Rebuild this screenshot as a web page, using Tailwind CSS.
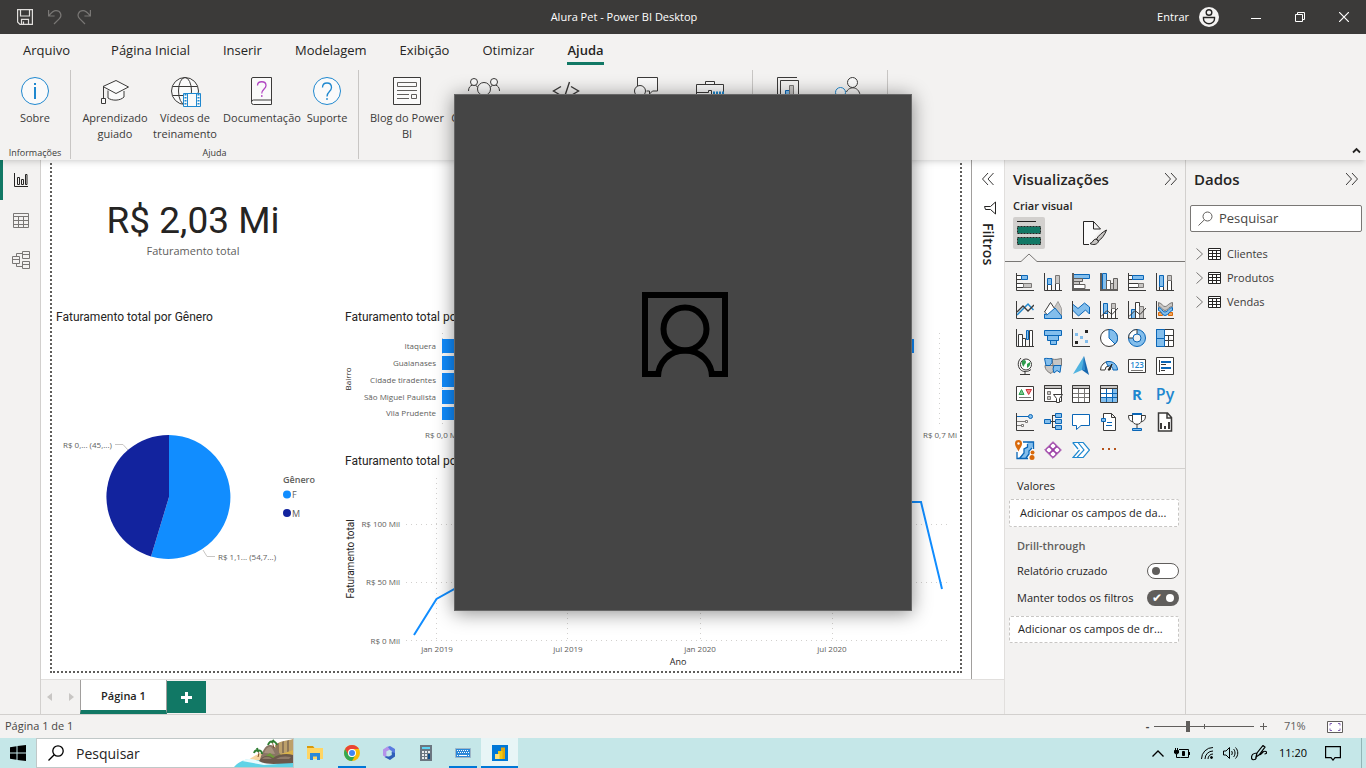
<!DOCTYPE html>
<html lang="pt-BR">
<head>
    <meta charset="UTF-8">
    <title>Alura Pet - Power BI Desktop</title>
    <script src="https://cdn.jsdelivr.net/npm/@tailwindcss/browser@4"></script>
</head>
<body class="min-h-screen flex flex-col relative bg-[#f3f2f1] text-[#252423] text-[11px] font-['Open_Sans',sans-serif]">

<!-- Title bar -->
<header class="h-[34px] bg-[#3b3a39] text-white flex items-center">
    <div class="w-32 pl-[17px] flex items-center gap-[14px]">
        <button aria-label="Salvar"><svg class="w-4 h-4" viewBox="0 0 16 16" fill="none" stroke="#e1dfdd" stroke-width="1.2"><path d="M.6.6h14.8v14.8H3L.6 13zM3.5.6v6.4h9V.6M4.5 15.4v-5h7v5M6.5 12.5v3"/></svg></button>
        <button aria-label="Desfazer"><svg class="w-4 h-4" viewBox="0 0 16 16" fill="none" stroke="#797775" stroke-width="1.2"><path d="M1.600 1v6h6M1.800 6.800C4 4 6 1.600 9 1.600c4.500 0 6.500 4.800 3.400 8L7 15"/></svg></button>
        <button aria-label="Refazer"><svg class="w-4 h-4" viewBox="0 0 16 16" fill="none" stroke="#797775" stroke-width="1.2"><path d="M13.400 1v6h-6M13.200 6.800C11 4 9 1.600 6 1.600c-4.500 0-6.500 4.800-3.400 8L8 15"/></svg></button>
    </div>
    <h1 class="flex-1 text-center">Alura Pet - Power BI Desktop</h1>
    <div class="w-[246px] flex items-center justify-end">
        <button class="flex items-center gap-[10px] mr-[15px]">Entrar
            <svg class="w-5 h-5" viewBox="0 0 20 20"><circle cx="10" cy="10" r="10" fill="#f3f2f1"/><g fill="none" stroke="#252423" stroke-width="1.400"><circle cx="10" cy="5.500" r="2.800"/><path d="M4.500 10.500h11v1.500a5.500 4.700 0 0 1-11 0z"/></g></svg>
        </button>
        <button aria-label="Minimizar" class="w-11 h-[34px] flex items-center justify-center"><svg class="w-[10px] h-[10px]" viewBox="0 0 10 10" stroke="#fff"><path d="M0 6.500h10"/></svg></button>
        <button aria-label="Restaurar" class="w-11 h-[34px] flex items-center justify-center"><svg class="w-[10px] h-[10px]" viewBox="0 0 10 10" fill="none" stroke="#fff"><path d="M.5 2.500h7v7h-7zM2.500 2.500v-2h7v7h-2"/></svg></button>
        <button aria-label="Fechar" class="w-11 h-[34px] flex items-center justify-center"><svg class="w-[10px] h-[10px]" viewBox="0 0 10 10" stroke="#fff" stroke-width="1.200"><path d="M0 0l10 10M10 0L0 10"/></svg></button>
    </div>
</header>

<!-- Ribbon -->
<div class="relative z-10 h-[126px] bg-[#f3f2f1] shadow-md">
    <nav class="h-9 pl-[23px] flex items-start gap-[33px] text-[13px] leading-8">
        <button class="mr-2">Arquivo</button>
        <button>Página Inicial</button>
        <button>Inserir</button>
        <button>Modelagem</button>
        <button>Exibição</button>
        <button>Otimizar</button>
        <button class="h-[31px] border-b-3 border-[#117865] font-semibold">Ajuda</button>
    </nav>
    <div class="h-[89px] flex text-center leading-4 text-[#3b3a39] whitespace-nowrap">
        <div class="w-[71px] border-r border-[#c8c6c4] flex flex-col justify-between">
            <button class="w-[70px] pt-[7px] flex flex-col items-center gap-[5px]">
                <svg class="w-7 h-7" viewBox="0 0 28 28" fill="none" stroke="#1f88cf"><circle cx="14" cy="14" r="13.500" fill="#fafafa"/><path stroke-width="2" d="M14 10v12M14 6v2"/></svg>
                Sobre
            </button>
            <span class="text-[9px] leading-3">Informações</span>
        </div>
        <div class="w-[288px] border-r border-[#c8c6c4] flex flex-col justify-between">
            <div class="flex pl-[6px] pt-[7px]">
                <button class="w-[76px] flex flex-col items-center gap-[5px]">
                    <svg class="w-7 h-7" viewBox="0 0 28 28" fill="none" stroke="#3b3a39"><path fill="#fafafa" d="M7 13.500v7.500c4 3 12 3 16-1v-6"/><path fill="#fafafa" d="M2 9.500L15 3.500 27.500 10 15 16.500zM2.500 10v11M.5 21.500h4v5h-4z"/></svg>
                    <span>Aprendizado<br>guiado</span>
                </button>
                <button class="w-16 flex flex-col items-center gap-[5px]">
                    <svg class="w-8 h-[30px] -mb-[2px]" viewBox="0 0 32 30" fill="none" stroke="#3b3a39"><circle cx="16" cy="14" r="13.500" fill="#fafafa"/><ellipse cx="16" cy="14" rx="6.500" ry="13.500"/><path d="M4 9.500h24M4 18.500h10"/><path stroke="#1f88cf" fill="#fafafa" d="M14.500 16.500h17v13h-17zM18.500 16.500v13M27.500 16.500v13"/><path stroke="#1f88cf" stroke-width="2" stroke-dasharray="1.500 1.500" d="M16.500 17v12M29.500 17v12"/></svg>
                    <span>Vídeos de<br>treinamento</span>
                </button>
                <button class="w-[90px] flex flex-col items-center gap-[5px]">
                    <svg class="w-7 h-7" viewBox="0 0 28 28" fill="none" stroke="#3b3a39"><path fill="#fafafa" d="M5 .5h18.500v27H5.500a2 2 0 0 1-2-2V2A1.500 1.500 0 0 1 5 .5zM3.500 25a2 2 0 0 1 2-2h18"/><path stroke="#b146c2" stroke-width="1.300" d="M9.500 8.500c0-5 8.500-5 8.500 0 0 3.500-4.200 3.500-4.200 8M13.800 18v2"/></svg>
                    Documentação
                </button>
                <button class="w-10 flex flex-col items-center gap-[5px]">
                    <svg class="w-7 h-7" viewBox="0 0 28 28" fill="none" stroke="#1f88cf"><circle cx="14" cy="14" r="13.500" fill="#fafafa"/><path stroke-width="1.300" d="M9.500 10.500c0-6 9-6 9 0 0 4-4.500 4-4.500 9M14 21v2"/></svg>
                    Suporte
                </button>
            </div>
            <span class="text-[9px] leading-3">Ajuda</span>
        </div>
        <div class="w-[394px] border-r border-[#c8c6c4] flex items-start pt-[7px]">
            <button class="w-24 flex flex-col items-center gap-[5px]">
                <svg class="w-7 h-7" viewBox="0 0 28 28" fill="none" stroke="#3b3a39"><path fill="#fafafa" d="M.5.5h27v27H.5z"/><path stroke="#605e5c" d="M4.500 5.500h19v4h-19zM4 13.500h20M4 17.500h12M4 21.500h12M18.500 17.500h5v4h-5z"/></svg>
                <span>Blog do Power<br>BI</span>
            </button>
            <button class="w-[58px] flex flex-col items-center gap-[5px]">
                <svg class="w-8 h-7" viewBox="0 0 32 28" fill="none" stroke="#3b3a39"><path d="M.5 14c0-7 7-7.500 9.500-3.500M31.500 14c0-7-7-7.500-9.500-3.500"/><g fill="#fafafa"><circle cx="6" cy="5" r="3.500"/><circle cx="26" cy="5" r="3.500"/><circle cx="16" cy="12" r="6.500"/></g></svg>
                Comunidade
            </button>
            <button aria-label="Power BI para desenvolvedores" class="w-[106px] flex justify-center"><svg class="w-7 h-7" viewBox="0 0 28 28" fill="none" stroke="#3b3a39" stroke-width="1.400"><path d="M9 9.500L1.500 14 9 18.500M19 9.500l7.500 4.500-7.500 4.500M17.500 5l-6 18"/></svg></button>
            <button aria-label="Enviar uma ideia" class="w-[54px] flex justify-center"><svg class="w-7 h-7" viewBox="0 0 28 28" fill="none" stroke="#3b3a39"><path fill="#fafafa" d="M5.500 12V.5h20v13.500h-5l-3 3v-3h-3"/><circle cx="8" cy="14" r="5.500" fill="#fafafa"/></svg></button>
            <button aria-label="Ferramentas externas" class="w-[74px] flex justify-center"><svg class="w-7 h-7" viewBox="0 0 28 28" fill="none" stroke="#3b3a39"><path fill="#fafafa" d="M.5 7.500h27V20H.5zM9.500 7.500v-3h9v3M.5 15.500h12v-2h3v4"/><path stroke="#1f88cf" stroke-width="3" stroke-dasharray="2 1" d="M17 16h11"/></svg></button>
        </div>
        <div class="w-[135px] border-r border-[#c8c6c4] flex items-start pt-[7px]">
            <button aria-label="Exemplos" class="w-[70px] flex justify-center"><svg class="w-7 h-7" viewBox="0 0 28 28" fill="none" stroke="#3b3a39"><path d="M3.500 24V.5h19.500M6.500 24V3.500h18V24"/><path fill="#83beec" stroke="#0a66b7" d="M11.500 13.500h4V24h-4z"/><path fill="#c8c6c4" stroke="#797775" d="M15.500 8.500h4V24h-4z"/></svg></button>
            <button aria-label="Comunidade de parceiros" class="w-[50px] flex justify-center"><svg class="w-7 h-7" viewBox="0 0 28 28" fill="none" stroke="#3b3a39"><circle cx="18.500" cy="5.500" r="5" fill="#fafafa"/><path d="M12.500 15c2-5.500 12-6.500 13.500 3"/><circle cx="6.500" cy="15.500" r="5" stroke="#1f88cf" fill="#fafafa"/></svg></button>
        </div>
        <button aria-label="Recolher a faixa de opções" class="ml-auto mr-[5px] self-end pb-1"><svg class="w-[9px] h-[9px]" viewBox="0 0 9 9" fill="none" stroke="#252423" stroke-width="1.800"><path d="M1 6.500L4.500 3 8 6.500"/></svg></button>
    </div>
</div>

<main class="flex-1 flex">
    <!-- View switcher -->
    <nav class="w-[41px] border-r border-[#d2d0ce]">
        <button aria-label="Exibição de relatório" class="w-10 h-10 pr-px border-l-3 border-[#117865] flex items-center justify-center"><svg class="w-[14px] h-[14px]" viewBox="0 0 14 14" fill="none" stroke="#252423"><path d="M.5 0v13.500H14M3.500 4.500h2v7h-2zM7.500 6.500h2v5h-2zM11.500 1.500h1.500v10h-1.500z"/></svg></button>
        <button aria-label="Exibição de tabela" class="w-[41px] h-10 flex items-center justify-center"><svg class="w-4 h-[15px]" viewBox="0 0 16 15" fill="none" stroke="#797775"><path d="M.5.5h15v14H.5zM.5 3.500h15M.5 7.500h15M.5 11.500h15M5.500 3v11M10.500 3v11"/></svg></button>
        <button aria-label="Exibição de modelo" class="w-[41px] h-10 flex items-center justify-center"><svg class="w-[18px] h-[18px]" viewBox="0 0 18 18" fill="none" stroke="#797775"><path d="M10.500.5h7v7h-7zM10.500 3.500h7M10.500 10.500h7v7h-7zM10.500 13.500h7M.5 5.500h7v7h-7zM.5 8.500h7M4.500 5.500v-3h6M4.500 12.500v3h6"/></svg></button>
    </nav>

    <div class="flex-1 flex flex-col">
        <div class="flex-1 flex bg-white">
            <!-- Report page -->
            <div class="flex-1 px-[9px] pt-[3px] pb-[6px]">
                <div class="h-full border-2 border-t-0 border-dotted border-[#605e5c] grid grid-cols-[288px_1fr] grid-rows-[144px_1fr] content-start">
                    <div class="w-[282px] pt-9 text-center font-['Roboto',sans-serif]">
                        <p class="text-[37px] leading-[44px]">R$ 2,03 Mi</p>
                        <p class="leading-4 text-[#605e5c] font-['Open_Sans',sans-serif]">Faturamento total</p>
                    </div>
                    <div></div>
                    <!-- Pie: F 54,7% / M 45,3% -->
                    <svg class="w-full text-[8px] font-['Open_Sans',sans-serif]" viewBox="0 0 288 364" fill="#605e5c">
                        <text class="text-[12px] font-['Roboto',sans-serif]" x="4" y="14" fill="#252423">Faturamento total por Gênero</text>
                        <path fill="#118dff" d="M117 190V128a62 62 0 1 1-18 121.500z"/>
                        <path fill="#12239e" d="M117 190L99 249.500A62 62 0 0 1 117 128z"/>
                        <path fill="none" stroke="#c8c6c4" d="M63 137.500h8l5 5.500M151 243l4 6.500h8"/>
                        <text x="11" y="141">R$ 0,... (45,...)</text>
                        <text x="166" y="253">R$ 1,1... (54,7...)</text>
                        <text class="text-[9px] font-semibold" x="231" y="176">Gênero</text>
                        <circle cx="235" cy="187.500" r="4" fill="#118dff"/><text class="text-[9px]" x="240" y="191">F</text>
                        <circle cx="235" cy="206" r="4" fill="#12239e"/><text class="text-[9px]" x="240" y="210">M</text>
                    </svg>
                    <div>
                        <!-- Bars by neighbourhood -->
                        <svg class="w-full text-[8px] font-['Open_Sans',sans-serif]" viewBox="0 0 620 144" fill="#605e5c">
                            <text class="text-[12px] font-['Roboto',sans-serif]" x="5" y="14" fill="#252423">Faturamento total por Bairro</text>
                            <path stroke="#d2d0ce" stroke-dasharray="1 4" d="M102.500 26v94M599.500 26v94"/>
                            <g fill="#118dff"><path d="M102 32h472v14H102zM102 49h330v14H102zM102 66h300v14H102zM102 83h260v14H102zM102 100h240v13H102z"/></g>
                            <g text-anchor="end">
                                <text x="96" y="42">Itaquera</text>
                                <text x="96" y="59">Guaianases</text>
                                <text x="96" y="76">Cidade tiradentes</text>
                                <text x="96" y="93">São Miguel Paulista</text>
                                <text x="96" y="109">Vila Prudente</text>
                            </g>
                            <g text-anchor="middle">
                                <text x="102" y="131">R$ 0,0 Mi</text>
                                <text x="600" y="131">R$ 0,7 Mi</text>
                                <text transform="translate(11 72) rotate(-90)" fill="#252423">Bairro</text>
                            </g>
                        </svg>
                        <!-- Revenue over time -->
                        <svg class="w-full text-[8px] font-['Open_Sans',sans-serif]" viewBox="0 0 620 220" fill="#605e5c">
                            <text class="text-[12px] font-['Roboto',sans-serif]" x="5" y="14" fill="#252423">Faturamento total por Ano</text>
                            <path stroke="#d2d0ce" stroke-dasharray="1 4" d="M66 73.500h543M66 131.500h543M66 189.500h543M96.500 27v163M227.500 27v163M360.500 27v163M492.500 27v163"/>
                            <path fill="none" stroke="#118dff" stroke-width="2" d="M74 184l22.500-36 18-10 60-20 80-30 100-20 120-10 80-7h26.500l21 87"/>
                            <g text-anchor="end">
                                <text x="60" y="76">R$ 100 Mil</text>
                                <text x="60" y="134">R$ 50 Mil</text>
                                <text x="60" y="193">R$ 0 Mil</text>
                            </g>
                            <g text-anchor="middle">
                                <text x="97" y="201">jan 2019</text>
                                <text x="228" y="201">jul 2019</text>
                                <text x="360" y="201">jan 2020</text>
                                <text x="492" y="201">jul 2020</text>
                                <text class="text-[9px]" x="338" y="214" fill="#252423">Ano</text>
                                <text class="text-[10px] font-['Roboto',sans-serif]" transform="translate(14 108) rotate(-90)" fill="#252423">Faturamento total</text>
                            </g>
                        </svg>
                    </div>
                </div>
            </div>
            <!-- Collapsed filters pane -->
            <aside class="w-[34px] border-x border-l-[#a19f9d] border-r-[#e1dfdd] flex flex-col items-center pt-[13px]">
                <button aria-label="Expandir filtros"><svg class="w-3 h-3" viewBox="0 0 12 12" fill="none" stroke="#3b3a39"><path d="M6 0L.5 6 6 12M11.500 0L6 6l5.500 6"/></svg></button>
                <svg class="w-3 h-[14px] mt-4 ml-[3px]" viewBox="0 0 12 14" fill="none" stroke="#252423"><path d="M11.500 1v12L6.500 8.500h-5l-1-3h6z"/></svg>
                <h2 class="mt-2 text-[14px] leading-5 font-semibold [writing-mode:vertical-rl]">Filtros</h2>
            </aside>
        </div>
        <!-- Page tabs -->
        <div class="h-[35px] flex border-t border-r border-[#e1dfdd]">
            <div class="w-[39px] flex items-center justify-between px-[6px]">
                <button aria-label="Página anterior"><svg class="w-[5px] h-2" viewBox="0 0 5 8" fill="#c8c6c4"><path d="M5 0v8L0 4z"/></svg></button>
                <button aria-label="Próxima página"><svg class="w-[5px] h-2" viewBox="0 0 5 8" fill="#c8c6c4"><path d="M0 0v8l5-4z"/></svg></button>
            </div>
            <button class="w-[87px] pt-[3px] bg-white border-x border-x-[#a19f9d] border-b-4 border-b-[#117865] font-semibold">Página 1</button>
            <button aria-label="Nova página" class="w-[39px] h-8 mt-px bg-[#117865] flex items-center justify-center"><svg class="w-[11px] h-[11px]" viewBox="0 0 11 11" stroke="#fff" stroke-width="3"><path d="M0 5.500h11M5.500 0v11"/></svg></button>
        </div>
    </div>

    <!-- Visualizations pane -->
    <aside class="w-[181px] border-r border-[#d2d0ce]">
        <div class="h-[38px] px-2 flex items-center justify-between">
            <h2 class="text-[15px] font-semibold">Visualizações</h2>
            <button aria-label="Recolher visualizações"><svg class="w-3 h-3" viewBox="0 0 12 12" fill="none" stroke="#3b3a39"><path d="M0 0l5.500 6L0 12M6 0l5.500 6L6 12"/></svg></button>
        </div>
        <h3 class="pl-2 pb-[3px] leading-4 font-semibold">Criar visual</h3>
        <div class="pl-2 flex items-center gap-[38px]">
            <button aria-label="Criar visual" class="w-8 h-8 bg-[#d2d0ce] rounded-xs flex items-center justify-center"><svg class="w-6 h-[25px]" viewBox="0 0 24 25" fill="none" stroke="#252423"><path d="M0 .5h19"/><path fill="#117865" stroke-dasharray="2 1" d="M.5 5.500h23v7H.5zM.5 16.500h23v7H.5z"/></svg></button>
            <button aria-label="Formatar página"><svg class="w-6 h-6" viewBox="0 0 24 24" fill="none" stroke="#252423"><path fill="#fafafa" d="M6 23.500H.5V.5h10l7 7.500M10.500.5V8h7"/><path fill="#c8c6c4" d="M23.500 9c-4 2-8.500 6-10 9l2 2c3-2 6.500-6.500 8-11zM13 18c-3 0-3 4-6 4.500 3 2 8 1 8.500-2.500z"/></svg></button>
        </div>
        <div class="flex items-end mt-1">
            <svg class="w-12 h-[9px]" viewBox="0 0 48 9" fill="none" stroke="#797775"><path d="M0 8.500h16L24 1l8 7.500h16"/></svg>
            <div class="flex-1 border-b border-[#797775]"></div>
        </div>
        <div class="grid grid-cols-[repeat(6,28px)] auto-rows-[28px] place-items-center pl-[6px] pt-[6px] pb-1 border-b border-[#d2d0ce]">
            <button aria-label="Barras empilhadas"><svg class="w-[18px] h-[18px]" viewBox="0 0 18 18" fill="#fff" stroke="#3b3a39"><path d="M.5 2.500h5v4h-5zM.5 10.500h7v4h-7z"/><path fill="#83beec" stroke="#0a66b7" d="M5.500 2.500h6v4h-6z"/><path fill="#c8c6c4" stroke="#797775" d="M7.500 10.500h8v4h-8z"/><path fill="none" d="M.5 0v17.500H18"/></svg></button>
            <button aria-label="Colunas empilhadas"><svg class="w-[18px] h-[18px]" viewBox="0 0 18 18" fill="#fff" stroke="#3b3a39"><path d="M3.500 11.500h4v6h-4zM11.500 10.500h4v7h-4z"/><path fill="#83beec" stroke="#0a66b7" d="M3.500 5.500h4v6h-4z"/><path fill="#c8c6c4" stroke="#797775" d="M11.500 2.500h4v8h-4z"/><path fill="none" d="M.5 0v17.500H18"/></svg></button>
            <button aria-label="Barras clusterizadas"><svg class="w-[18px] h-[18px]" viewBox="0 0 18 18" fill="#c8c6c4" stroke="#605e5c"><path fill="#83beec" stroke="#0a66b7" d="M.5 1.500h17v4H.5z"/><path d="M.5 5.500h10v3H.5zM.5 8.500h7v3H.5z"/><path fill="#fff" d="M.5 11.500h12.500v4H.5z"/><path fill="none" stroke-width="2" d="M1 0v17H18"/></svg></button>
            <button aria-label="Colunas clusterizadas"><svg class="w-[18px] h-[18px]" viewBox="0 0 18 18" fill="#c8c6c4" stroke="#605e5c"><path fill="#83beec" stroke="#0a66b7" d="M2.500.5h4v17h-4z"/><path fill="#fff" d="M6.500 7.500h4v10h-4z"/><path d="M10.500 10.500h3v7h-3zM13.500 5.500h4v12h-4z"/><path fill="none" stroke-width="2" d="M1 0v17H18"/></svg></button>
            <button aria-label="Barras 100% empilhadas"><svg class="w-[18px] h-[18px]" viewBox="0 0 18 18" fill="#fff" stroke="#3b3a39"><path d="M.5 2.500h4v4h-4zM.5 10.500h10v4H.5z"/><path fill="#83beec" stroke="#0a66b7" d="M4.500 2.500h11v4h-11z"/><path fill="#c8c6c4" stroke="#797775" d="M10.500 10.500h5v4h-5z"/><path fill="none" d="M.5 0v17.500H18"/></svg></button>
            <button aria-label="Colunas 100% empilhadas"><svg class="w-[18px] h-[18px]" viewBox="0 0 18 18" fill="#fff" stroke="#3b3a39"><path d="M3.500 13.500h4v4h-4zM11.500 7.500h4v10h-4z"/><path fill="#83beec" stroke="#0a66b7" d="M3.500 2.500h4v11h-4z"/><path fill="#c8c6c4" stroke="#797775" d="M11.500 2.500h4v5h-4z"/><path fill="none" d="M.5 0v17.500H18"/></svg></button>

            <button aria-label="Gráfico de linhas"><svg class="w-[18px] h-[18px]" viewBox="0 0 18 18" fill="none" stroke="#3b3a39"><path stroke="#1f88cf" stroke-width="1.500" d="M1 14l6-6 5-5 5.500 6"/><path stroke-width="1.300" d="M1 11l6-6 5 5 6-6"/><path d="M.5 0v17.500H18"/></svg></button>
            <button aria-label="Gráfico de área"><svg class="w-[18px] h-[18px]" viewBox="0 0 18 18" fill="#fff" stroke="#3b3a39"><path fill="#c8c6c4" stroke="#a19f9d" d="M9 9l5-8.500 3.500 7v10H9z"/><path d="M.5 11L6.500 1.500l6 9-6 6z"/><path fill="#83beec" stroke="#0a66b7" d="M.5 17.500V13l2.500 1 8-7 6.500 8v2.500z"/></svg></button>
            <button aria-label="Gráfico de área empilhada"><svg class="w-[18px] h-[18px]" viewBox="0 0 18 18" fill="#fff" stroke="#3b3a39"><path fill="#83beec" stroke="#0a66b7" d="M.5 3L6 7.500 12.500 2l5 4v7l-4-4-7 6-6-6z"/><path fill="none" d="M.5 0v17.500H18"/></svg></button>
            <button aria-label="Linha e colunas empilhadas"><svg class="w-[18px] h-[18px]" viewBox="0 0 18 18" fill="#fff" stroke="#3b3a39"><path d="M3.500 8.500h4v9h-4zM11.500 7.500h4v10h-4z"/><path fill="#83beec" stroke="#0a66b7" d="M3.500 2.500h4v10h-4z"/><path fill="#c8c6c4" stroke="#797775" d="M11.500 2.500h4v5h-4z"/><path fill="none" d="M.5 0v17.500H18M1 15.500l6-6 5 4 6-6.500"/></svg></button>
            <button aria-label="Linha e colunas clusterizadas"><svg class="w-[18px] h-[18px]" viewBox="0 0 18 18" fill="#fff" stroke="#3b3a39"><path fill="#83beec" stroke="#0a66b7" d="M3.500 8.500h4v9h-4z"/><path d="M7.500 1.500h4v16h-4z"/><path fill="#c8c6c4" stroke="#797775" d="M11.500 5.500h4v12h-4z"/><path fill="none" d="M.5 0v17.500H18M1 15.500l6-6 5 4 6-6.500"/></svg></button>
            <button aria-label="Faixa de opções"><svg class="w-[18px] h-[18px]" viewBox="0 0 18 18" fill="none" stroke="#3b3a39"><path fill="#c8c6c4" stroke="#797775" d="M2.500 1.500c4 1 4 4 6.500 4s3-3 7.500-4v4c-4 0-4.500 4-7.500 4s-3-4-6.500-4z"/><path fill="#f2a65a" stroke="#d8690b" d="M2.500 11.500h4v3h-4zM12.500 11.500h4v3h-4z"/><path fill="#83beec" stroke="#0a66b7" d="M2.500 6.500c3.500 0 3.500 4.500 6.500 4.500s4-4.500 7.500-4.500v3c-3 0-4 5-7.500 5s-3.500-5-6.500-5z"/><path d="M.5 0v17.500H18"/></svg></button>

            <button aria-label="Cascata"><svg class="w-[18px] h-[18px]" viewBox="0 0 18 18" fill="#fff" stroke="#3b3a39"><path d="M2.500 5.500h4v12h-4zM6.500 9.500h3v8h-3zM13.500 1.500h3v16h-3z"/><path fill="#83beec" stroke="#0a66b7" d="M10.500 1.500h2v9h-2z"/><path fill="none" d="M.5 0v17.500H18"/></svg></button>
            <button aria-label="Funil"><svg class="w-[18px] h-[18px]" viewBox="0 0 18 18" fill="#83beec" stroke="#0a66b7"><path d="M.5 1.500h17v5H.5zM3.500 6.500h11v5h-11zM6.500 11.500h6v4h-6z"/></svg></button>
            <button aria-label="Dispersão"><svg class="w-[18px] h-[18px]" viewBox="0 0 18 18" fill="none"><path fill="#83beec" d="M3 4h3v3H3zM8 7h3v3H8zM13 11h3v3h-3z"/><path fill="#252423" d="M13 1h3v3h-3zM3 12h3v3H3z"/><path stroke="#3b3a39" d="M.5 0v17.500H18"/></svg></button>
            <button aria-label="Pizza"><svg class="w-[18px] h-[18px]" viewBox="0 0 18 18" fill="#fff" stroke="#3b3a39"><circle cx="9" cy="9" r="8.500"/><path fill="#83beec" stroke="#0a66b7" d="M9 9V.5a8.500 8.500 0 0 1 6 14.500z"/></svg></button>
            <button aria-label="Rosca"><svg class="w-[18px] h-[18px]" viewBox="0 0 18 18" fill="#83beec" stroke="#0a66b7"><circle cx="9" cy="9" r="8.500"/><path fill="#fff" stroke="#3b3a39" d="M9 9H.5A8.500 8.500 0 0 1 9 .5z"/><circle cx="9" cy="9" r="4" fill="#f3f2f1"/></svg></button>
            <button aria-label="Treemap"><svg class="w-[18px] h-[18px]" viewBox="0 0 18 18" fill="#fff" stroke="#3b3a39"><path d="M.5.5h17v17H.5zM8.500 6.500h9M12.500 6.500v5h5M8.500 11.500h4v6"/><path fill="#83beec" stroke="#0a66b7" d="M.5.5h8v9h-8zM.5 9.500h8v8h-8z"/></svg></button>

            <button aria-label="Mapa"><svg class="w-[18px] h-[18px]" viewBox="0 0 18 18" fill="none" stroke="#3b3a39"><circle cx="10" cy="7.500" r="5.500" fill="#fff"/><path fill="#2f9e4f" stroke="none" d="M6 4c2-2 4-1 4 1s-2 2-2 4-3-2-2-5zM11 7l3-2c1 3-1 5-3 6z"/><path d="M5 1C1 4.500 1.500 11 5.500 13.500c3 1.800 7 1.200 9.500-1M9 14.500v3M4 17.500h10"/></svg></button>
            <button aria-label="Mapa coroplético"><svg class="w-[18px] h-[18px]" viewBox="0 0 18 18" fill="#c8c6c4" stroke="#797775"><path d="M8 2c4 1 6 0 9.500-.5V8.500H9zM1 8.500h8l1 5-3 3C4 15 1 13 1 8.500z"/><path fill="#83beec" stroke="#0a66b7" d="M.5 1.500C3 1 5 2 8 1.500v4l-2 3H2zM10 8.500h7l-1 7-3-2-3 2.500-1-4z"/></svg></button>
            <button aria-label="Mapa do Azure"><svg class="w-[18px] h-[20px]" viewBox="0 0 18 20"><path fill="#50b3e0" d="M12 0L1 18l9-4z"/><path fill="#1767ae" d="M12 0l5 19-7-5z"/><path fill="#2f8fd0" d="M12 0l-2 14 3 0z"/></svg></button>
            <button aria-label="Medidor"><svg class="w-[18px] h-[18px]" viewBox="0 0 18 18" fill="#83beec" stroke="#0a66b7"><path stroke="#3b3a39" fill="#fff" d="M.5 13A8.500 8.500 0 0 1 9 4.500V9a4 4 0 0 0-4 4z"/><path d="M6 5a8.500 8.500 0 0 1 11.500 8H13a4 4 0 0 0-5-4z"/><path fill="#252423" stroke="#252423" d="M12 7l-2 6H8z"/></svg></button>
            <button aria-label="Cartão"><svg class="w-[18px] h-[18px]" viewBox="0 0 18 18"><path fill="#fff" stroke="#3b3a39" d="M.5 2.500h17v13H.5z"/><path stroke="#797775" d="M3 13.500h12"/><text class="text-[8px] font-semibold" x="9" y="11" text-anchor="middle" fill="#1f88cf">123</text></svg></button>
            <button aria-label="Cartão de várias linhas"><svg class="w-[18px] h-[18px]" viewBox="0 0 18 18"><path fill="#fff" stroke="#3b3a39" d="M.5.5h17v17H.5z"/><path stroke="#3b3a39" d="M3.500 3v12M5 7.500h5M5 13.500h4"/><path stroke="#0a66b7" stroke-width="2" d="M5 5h10M5 11h10"/></svg></button>

            <button aria-label="KPI"><svg class="w-[18px] h-[18px]" viewBox="0 0 18 18" fill="#fff" stroke="#3b3a39"><path d="M.5 1.500h17v14H.5z"/><path stroke="#797775" d="M3 12.500h12"/><path fill="#7cc48f" stroke="#2f9e4f" d="M3 9.500L5.500 4.500 8 9.500z"/><path fill="#e88" stroke="#d13438" d="M10 4.500h5.500L12.700 9.500z"/></svg></button>
            <button aria-label="Segmentação de dados"><svg class="w-[19px] h-[18px]" viewBox="0 0 19 18" fill="#fff" stroke="#3b3a39"><path d="M.5.500h17v16H.5z"/><path fill="#c8c6c4" d="M.5.500h17v3H.5z"/><path fill="#c8c6c4" stroke="#797775" d="M3.500 6.500h3v3h-3zM3.500 11.500h3v3h-3z"/><path d="M9.500 9.500h9l-3 4v4h-3v-4z"/></svg></button>
            <button aria-label="Tabela"><svg class="w-[18px] h-[18px]" viewBox="0 0 18 18" fill="#fff" stroke="#3b3a39"><path d="M.5.500h17v17H.5z"/><path stroke="#797775" d="M6.500 3v14M12.500 3v14M1 8.500h16M1 12.500h16"/><path fill="#c8c6c4" d="M.5.500h17v3H.5z"/></svg></button>
            <button aria-label="Matriz"><svg class="w-[18px] h-[18px]" viewBox="0 0 18 18" fill="#fff" stroke="#3b3a39"><path d="M.5.500h17v17H.5z"/><path fill="#83beec" stroke="none" d="M12 3h5v14H1v-5h11z"/><path stroke="#0a66b7" d="M6.500 3v14M12.500 3v14M1 8.500h16M1 12.500h16"/><path fill="#c8c6c4" d="M.5.500h17v3H.5z"/></svg></button>
            <button aria-label="Visual do script R" class="text-[15px] leading-[18px] font-bold text-[#1f88cf]">R</button>
            <button aria-label="Visual do Python" class="text-[16px] leading-[20px] font-semibold text-[#1f88cf]">Py</button>

            <button aria-label="Principais influenciadores"><svg class="w-[18px] h-[18px]" viewBox="0 0 18 18" fill="#83beec" stroke="#3b3a39"><path stroke="#0a66b7" d="M1 3.500h12"/><circle cx="14.500" cy="3.500" r="2" stroke="#0a66b7"/><path stroke="#797775" fill="#fff" d="M1 8.500h8M9.500 7.500h2v2h-2zM1 12.500h4M5.500 11.500h2v2h-2z"/><path fill="none" d="M.5 0v17.500H18"/></svg></button>
            <button aria-label="Árvore hierárquica"><svg class="w-[18px] h-[18px]" viewBox="0 0 18 18" fill="#83beec" stroke="#0a66b7"><path fill="none" stroke="#3b3a39" d="M6 8.500h6M8.500 2.500v12M8 2.500h4M8 14.500h4"/><path d="M.5 6.500h6v4h-6zM11.500.5h6v4h-6zM11.500 6.500h6v4h-6zM11.500 12.500h6v4h-6z"/></svg></button>
            <button aria-label="P e R"><svg class="w-[18px] h-[18px]" viewBox="0 0 18 18" fill="#fff" stroke="#0a66b7"><path d="M.5 1.500h17v11H9l-4.500 4v-4h-4z"/></svg></button>
            <button aria-label="Narrativa"><svg class="w-[18px] h-[18px]" viewBox="0 0 18 18" fill="#fff" stroke="#3b3a39"><path d="M3.500.5h8l4 4v13h-12zM11.500.5v4h4"/><path stroke="#0a66b7" fill="#83beec" d="M1.500 5.500h4v3h-4zM7 9.500h5M6 12.500h6"/></svg></button>
            <button aria-label="Metas"><svg class="w-[18px] h-[18px]" viewBox="0 0 18 18" fill="#fff" stroke="#3b3a39"><path d="M4.500.5h9v7c0 5-9 5-9 0zM4.500 2.500h-4c0 4 1.500 6 4.500 6M13.500 2.500h4c0 4-1.500 6-4.500 6M9 11v4"/><path fill="#83beec" stroke="#0a66b7" d="M4.500 15.500h9v2h-9zM4.500.5h9v1h-9z"/></svg></button>
            <button aria-label="Relatório paginado"><svg class="w-[18px] h-[20px]" viewBox="0 0 18 20" fill="#fff" stroke="#3b3a39"><path stroke-width="1.500" d="M2.500 1h9l4 4.500V19h-13zM11 1v5h5"/><path fill="#3b3a39" stroke="none" d="M4 11h2v6H4zM8 14h2v3H8zM12 10h2v7h-2z"/></svg></button>

            <button aria-label="ArcGIS"><svg class="w-[20px] h-[20px]" viewBox="0 0 20 20" fill="#fff"><path d="M2 2h16v16H2z"/><path fill="#83beec" d="M12 2h6v5l-4 3v3l-3 5H3l6-4V9l4-3z"/><path fill="none" stroke="#0a66b7" stroke-width="1.300" d="M8 2h10.500v7M2 12v6.500h11M12.500 4v3L9 9v4l-4 5M17 8l-3 3v3l-3 4"/><path fill="#d8690b" d="M0 3.500a3.500 3.500 0 0 1 7 0c0 3-2 4-3.500 8C2 8 0 6.500 0 3.500z"/><circle cx="17.500" cy="12.500" r="2" fill="#d8690b"/><circle cx="17" cy="17.500" r="2.500" fill="#d8690b"/><circle cx="3.500" cy="3.500" r="1.200"/></svg></button>
            <button aria-label="Power Apps"><svg class="w-[18px] h-[18px]" viewBox="0 0 18 18" fill="#fff" stroke="#9b3fa5"><path d="M9 .7L17.300 9 9 17.300.7 9z"/><path fill="none" d="M5 5l8 8M13 5l-8 8"/><rect x="6.500" y="2.500" width="5" height="5" rx="1.500" transform="rotate(45 9 5)"/><rect x="6.500" y="10.500" width="5" height="5" rx="1.500" transform="rotate(45 9 13)"/><rect x="2.500" y="6.500" width="5" height="5" rx="1.500" transform="rotate(45 5 9)"/><rect x="10.500" y="6.500" width="5" height="5" rx="1.500" transform="rotate(45 13 9)"/></svg></button>
            <button aria-label="Power Automate"><svg class="w-[18px] h-[18px]" viewBox="0 0 18 18" fill="#fff" stroke="#1f88cf" stroke-width="1.200"><path d="M.7 1.500h10.500L17.500 9l-6.300 7.500H5M.7 1.500L6 8M6 1.500L12 9l-7 7.500H1L7.500 9"/></svg></button>
            <button aria-label="Obter mais visuais"><svg class="w-[18px] h-[18px]" viewBox="0 0 18 18" fill="#b5531b"><path d="M2 7h2v2H2zM8 7h2v2H8zM14 7h2v2h-2z"/></svg></button>
        </div>
        <div class="pl-1 pr-[6px] pt-2">
            <h3 class="pl-2 leading-[18px]">Valores</h3>
            <button class="mt-1 w-full h-7 pl-[10px] pt-px text-left bg-white border border-dashed border-[#c8c6c4] rounded-xs">Adicionar os campos de da...</button>
            <h3 class="pl-2 pt-2 leading-[22px] font-semibold text-[#605e5c]">Drill-through</h3>
            <label class="h-7 pl-2 flex items-center justify-between">Relatório cruzado
                <input type="checkbox" class="appearance-none w-8 h-4 flex items-center pl-[4px] bg-white border border-[#605e5c] rounded-full before:content-[''] before:w-2 before:h-2 before:rounded-full before:bg-[#605e5c]">
            </label>
            <label class="h-[26px] pl-2 flex items-center justify-between">Manter todos os filtros
                <input type="checkbox" checked class="appearance-none w-8 h-4 flex items-center justify-between px-[5px] bg-[#605e5c] rounded-full text-white text-[12px] leading-4 before:content-['✔'] after:content-[''] after:w-2 after:h-2 after:rounded-full after:bg-white">
            </label>
            <button class="mt-[5px] w-full h-[27px] pl-2 text-left bg-white border border-dashed border-[#c8c6c4] rounded-xs">Adicionar os campos de dr...</button>
        </div>
    </aside>

    <!-- Data pane -->
    <aside class="w-[180px]">
        <div class="h-[38px] px-2 flex items-center justify-between">
            <h2 class="text-[15px] font-semibold">Dados</h2>
            <button aria-label="Recolher dados"><svg class="w-3 h-3" viewBox="0 0 12 12" fill="none" stroke="#3b3a39"><path d="M0 0l5.500 6L0 12M6 0l5.500 6L6 12"/></svg></button>
        </div>
        <label class="mt-[7px] mx-1 h-[27px] px-[7px] flex items-center gap-[6px] bg-white border border-[#797775] rounded-xs">
            <svg class="w-[15px] h-[15px] shrink-0" viewBox="0 0 15 15" fill="none" stroke="#605e5c"><circle cx="9.500" cy="5.500" r="4.500"/><path d="M6.500 8.700L.5 14.500"/></svg>
            <input type="text" aria-label="Pesquisar campos" placeholder="Pesquisar" class="w-full outline-none text-[13px] placeholder:text-[#484644]">
        </label>
        <ul class="pt-[10px] leading-6 text-[#3b3a39]">
            <li><button class="pl-[10px] flex items-center">
                <svg class="w-[7px] h-3 mr-[5px]" viewBox="0 0 7 12" fill="none" stroke="#797775"><path d="M.5.500L6.500 6l-6 5.500"/></svg>
                <svg class="w-[13px] h-3 mr-[6px]" viewBox="0 0 13 12" fill="#fff" stroke="#252423"><path d="M.5.500h12v11H.5zM.5 2.500h12M.5 5.500h12M.5 8.500h12M4.500 2v9M8.500 2v9"/></svg>Clientes</button></li>
            <li><button class="pl-[10px] flex items-center">
                <svg class="w-[7px] h-3 mr-[5px]" viewBox="0 0 7 12" fill="none" stroke="#797775"><path d="M.5.500L6.500 6l-6 5.500"/></svg>
                <svg class="w-[13px] h-3 mr-[6px]" viewBox="0 0 13 12" fill="#fff" stroke="#252423"><path d="M.5.500h12v11H.5zM.5 2.500h12M.5 5.500h12M.5 8.500h12M4.500 2v9M8.500 2v9"/></svg>Produtos</button></li>
            <li><button class="pl-[10px] flex items-center">
                <svg class="w-[7px] h-3 mr-[5px]" viewBox="0 0 7 12" fill="none" stroke="#797775"><path d="M.5.500L6.500 6l-6 5.500"/></svg>
                <svg class="w-[13px] h-3 mr-[6px]" viewBox="0 0 13 12" fill="#fff" stroke="#252423"><path d="M.5.500h12v11H.5zM.5 2.500h12M.5 5.500h12M.5 8.500h12M4.500 2v9M8.500 2v9"/></svg>Vendas</button></li>
        </ul>
    </aside>
</main>

<!-- Status bar -->
<footer class="h-6 pl-[5px] pr-[23px] flex items-center border-t border-[#d2d0ce] text-[#484644]">
    <span>Página 1 de 1</span>
    <button aria-label="Diminuir zoom" class="ml-auto mr-[2px] w-[9px] font-bold">-</button>
    <div class="relative flex items-center">
        <span class="absolute left-[50px] w-px h-[5px] bg-[#605e5c]"></span>
        <input type="range" aria-label="Zoom" value="33" class="appearance-none w-[100px] h-px bg-[#605e5c] [&::-webkit-slider-thumb]:appearance-none [&::-webkit-slider-thumb]:w-1 [&::-webkit-slider-thumb]:h-[11px] [&::-webkit-slider-thumb]:bg-[#605e5c]">
    </div>
    <button aria-label="Aumentar zoom" class="ml-[6px]"><svg class="w-[7px] h-[7px]" viewBox="0 0 7 7" stroke="#605e5c"><path d="M0 3.500h7M3.500 0v7"/></svg></button>
    <span class="w-[60px] pl-[17px] text-[#605e5c]">71%</span>
    <button aria-label="Ajustar à página"><svg class="w-4 h-3" viewBox="0 0 16 12" fill="#fff" stroke="#605e5c"><path d="M.5.500h15v11H.5z"/><path stroke="#8764b8" d="M3 4.500v-2h2M11 2.500h2v2M3 7.500v2h2M11 9.500h2v-2"/></svg></button>
</footer>

<!-- Windows taskbar -->
<div class="h-[30px] flex bg-[#c5e7e8] text-black">
    <button aria-label="Iniciar" class="w-9 flex items-center justify-center"><svg class="w-4 h-4" viewBox="0 0 16 16"><path d="M0 2.200L6.500 1.300v6.200H0zM7.500 1.100L16 0v7.500H7.500zM0 8.500h6.500v6.200L0 13.800zM7.500 8.500H16V16l-8.500-1.100z"/></svg></button>
    <label class="w-[258px] pl-[11px] flex items-center gap-3 bg-white border border-[#c0c8c8]">
        <svg class="w-4 h-4 shrink-0" viewBox="0 0 16 16" fill="none" stroke="#000" stroke-width="1.300"><circle cx="10" cy="6" r="5.200"/><path d="M6.200 9.800L.5 15.500"/></svg>
        <input type="text" aria-label="Pesquisar no Windows" placeholder="Pesquisar" class="flex-1 min-w-0 outline-none text-[14px] placeholder:text-[#252423]">
        <svg class="w-[60px] h-7 shrink-0" viewBox="0 0 60 28"><path fill="#f6d5a0" d="M14 22c6-5 12-8 18-9l12 10z"/><path fill="#5fd3e6" d="M1 28c5-6 12-9 20-7l39 2v5z"/><path fill="#e9fbfd" d="M9 22c8-4 14-1 20 1s12 0 16 2l-14 1z"/><path fill="#bda06a" d="M42 6c6-5 12-4 18-6v19H42z"/><path fill="#8d7658" d="M43 5l3-1v13h-3zM49 3l2-1v12h-2zM54 2l2-1v12h-2z"/><path fill="#d9b24a" d="M46 16l14-5v6H46z"/><path fill="#8a7565" d="M27 21c2-8 5-16 11-15 5 1 9 10 12 13z"/><path fill="#a8937f" d="M31 14c2-5 5-7 7-6 2 2 3 5 4 7z"/><path fill="#6f9a3a" d="M31 18l6-4 5 4 5-3 2 4H30z"/><path fill="#6b584b" d="M26 22c3-6 10-6 14-3 5-4 14-5 20-3v8c-10 0-26 3-34-2z"/><path fill="#8f7a69" d="M29 20c3-3 7-3 10 0zM43 20c4-3 10-3 15-2l-2 2z"/><path fill="none" stroke="#7a4a25" d="M25 18c1-3 1-4 0-6M41 9c-1-3-1-4-2-6"/><path fill="none" stroke="#2f7d32" stroke-width="2" d="M21 14c1-3 3-3 4-2 2-1 4 0 4 3M35 6c1-3 3-4 4-3 2-1 4 0 5 3M25 12l-1-3M39 3l2-2"/></svg>
    </label>
    <div class="flex pl-[2px]">
        <button aria-label="Explorador de Arquivos" class="w-[37px] flex items-center justify-center"><svg class="w-4 h-4" viewBox="0 0 16 16"><path fill="#d99a0b" d="M0 1h6l1.500 2H0z"/><path fill="#ffd563" d="M0 3h16v11H0z"/><path fill="#2b88d8" d="M3 8h10v7h-3v-3.500H6V15H3z"/></svg></button>
        <button aria-label="Google Chrome" class="w-[37px] flex items-center justify-center relative"><svg class="w-4 h-4" viewBox="0 0 16 16"><circle cx="8" cy="8" r="8" fill="#fbbc05"/><path fill="#ea4335" d="M1.100 4A8 8 0 0 1 14.900 4H8a4 4 0 0 0-3.500 6z"/><path fill="#34a853" d="M1.100 4A8 8 0 0 0 8 16l3.500-6A4 4 0 0 1 4.500 10z"/><circle cx="8" cy="8" r="4" fill="#fff"/><circle cx="8" cy="8" r="3" fill="#4285f4"/></svg><span class="absolute bottom-0 w-7 h-[2px] bg-[#0078d7]"></span></button>
        <button aria-label="Microsoft 365" class="w-[37px] flex items-center justify-center"><svg class="w-[14px] h-[14px]" viewBox="0 0 14 14"><path fill="#5a7be0" d="M4.500 1.200L8 0l5 3v6.500l-3.200-2V5L7 3.500z"/><path fill="#b493ea" d="M5.500.5L1 3.500v6l3.500 2.300-.2-6.300L8 3.500z"/><path fill="#2f5fb8" d="M13 7v3.500L8 14l-5.500-3 1.800-.7L7 10.500 9.800 9V6z"/></svg></button>
        <button aria-label="Calculadora" class="w-[37px] flex items-center justify-center"><svg class="w-3 h-4" viewBox="0 0 12 16"><path fill="#6b7680" d="M0 0h12v16H0z"/><path fill="#5cd3f5" d="M2 2h8v2H2z"/><path fill="#e6eaed" d="M2 6h2v2H2zM5 6h2v2H5zM8 6h2v2H8zM2 9h2v2H2zM5 9h2v2H5zM2 12h2v2H2zM5 12h2v2H5z"/><path fill="#0f4a85" d="M8 9h2v5H8z"/></svg></button>
        <button aria-label="Teclado virtual" class="w-[37px] flex items-center justify-center relative"><svg class="w-4 h-[10px]" viewBox="0 0 16 10"><path fill="#2b88d8" stroke="#9fb6c6" d="M.5.500h15v9H.5z"/><path stroke="#fff" stroke-dasharray="1 1" d="M2 2.500h12M3 4.500h11"/><path stroke="#fff" d="M2 7.500h1M4 7.500h8M13 7.500h1"/></svg><span class="absolute bottom-0 w-7 h-[2px] bg-[#0078d7]"></span></button>
        <button aria-label="Power BI Desktop" class="w-[37px] flex items-center justify-center relative bg-[#e8f5f6]"><svg class="w-4 h-4" viewBox="0 0 16 16"><path fill="#0078d7" d="M0 0h16v16H0z"/><path fill="#e0a70c" d="M9 2.500h4V14H9z"/><path fill="#f2c811" d="M6 6h4.500v8H6z"/><path fill="#ffe27a" d="M3 9h4.500v5H3z"/></svg><span class="absolute bottom-0 w-full h-[2px] bg-[#0078d7]"></span></button>
    </div>
    <div class="ml-auto pr-1 flex items-center">
        <button aria-label="Ícones ocultos" class="mr-[10px]"><svg class="w-3 h-[7px]" viewBox="0 0 12 7" fill="none" stroke="#000" stroke-width="1.300"><path d="M.5 6.500L6 1l5.500 5.500"/></svg></button>
        <svg class="w-4 h-3 mr-[11px]" viewBox="0 0 16 12" fill="none" stroke="#000"><path d="M5 2.500h9.500v8h-8M15.500 5v3"/><path fill="#000" d="M8.500 4.500h2v4h-2zM.5 3.500h4V6c0 1-4 1-4 0z"/><path d="M1.500 1v2M3.500 1v2M2.500 7v3.500h4"/></svg>
        <svg class="w-3 h-3 mr-[10px]" viewBox="0 0 12 12" fill="none" stroke="#000"><path d="M.5 12A11.500 11.500 0 0 1 12 .500M4 12a8 8 0 0 1 8-8M7 12a5 5 0 0 1 5-5"/><circle cx="10.500" cy="10.500" r="1" fill="#000"/></svg>
        <svg class="w-4 h-[14px] mr-3" viewBox="0 0 16 14" fill="none" stroke="#000"><path d="M.5 5v4h2.500L6.500 12.500v-11L3 5zM8.500 5c1 1 1 3 0 4M10.500 3c2 2 2 6 0 8M12.500 1.500c3 3 3 8 0 11"/></svg>
        <svg class="w-4 h-4 mr-3" viewBox="0 0 16 16" fill="none" stroke="#000" stroke-width="1.200"><path d="M5 12l1-4 6-7.500 2 1.500-6 8zM6 8C2 8 .5 10.500.5 12.500c0 3 4 3 5 0M8 10c2 0 3-2 4-3s3-1 3.500 0-.5 2-2 2"/></svg>
        <time class="mr-[18px]">11:20</time>
        <button aria-label="Notificações" class="mr-5"><svg class="w-4 h-[15px]" viewBox="0 0 16 15" fill="none" stroke="#000" stroke-width="1.200"><path d="M.6.600h14.800v11H10l-2 2.500-2-2.500H.6z"/></svg></button>
        <span class="w-px h-[30px] bg-[#93b5b6]"></span>
    </div>
</div>

<!-- Sign-in dialog, still loading -->
<div role="dialog" aria-label="Entrar na conta" class="absolute z-20 top-[94px] left-1/2 -translate-x-1/2 w-[458px] h-[517px] bg-[#454545] border border-[#666] shadow-[0_2px_18px_rgba(0,0,0,0.45)] pt-[197px]">
    <svg class="w-[86px] h-[86px] ml-[187px]" viewBox="0 0 86 86" fill="none" stroke="#000" stroke-width="6"><path d="M18 82H3V3h80v79H68"/><circle cx="43" cy="37" r="21.500"/><path d="M16 85c0-14 11-26.500 27-26.500S70 71 70 85"/></svg>
</div>

</body>
</html>
